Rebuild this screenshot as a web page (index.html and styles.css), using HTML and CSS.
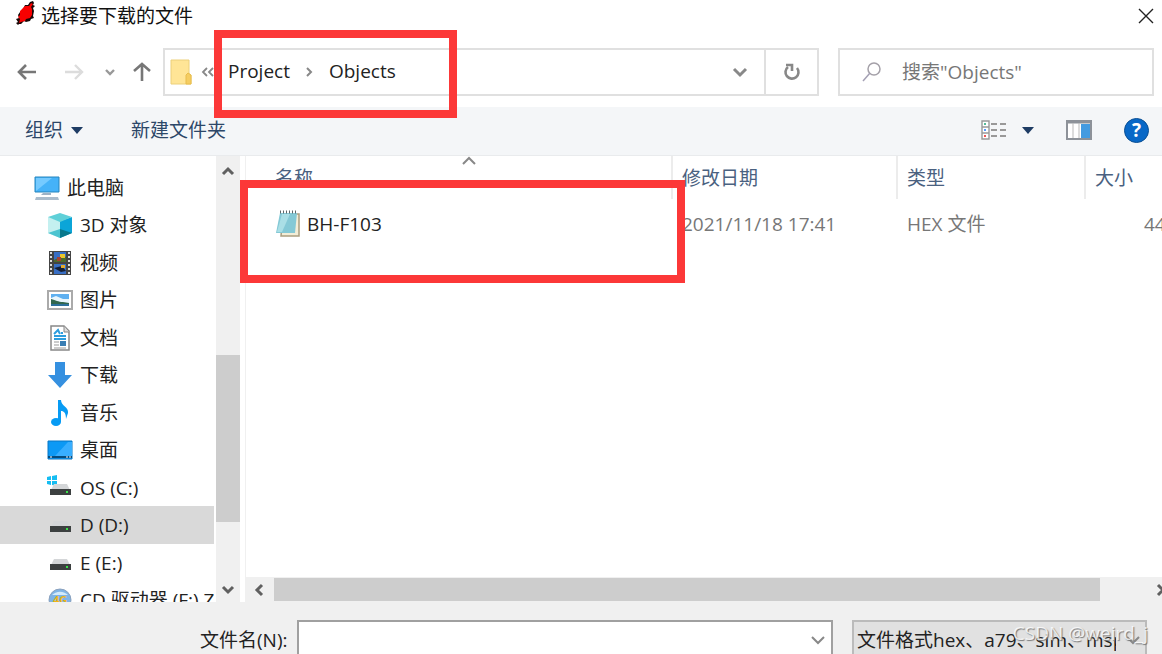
FILE: index.html
```html
<!DOCTYPE html>
<html lang="zh-CN">
<head>
    <meta charset="UTF-8">
    <meta name="viewport" content="width=device-width, initial-scale=1.0">
    <title>选择要下载的文件</title>
    <link rel="stylesheet" href="styles.css">
</head>
<body>
<div class="dialog">
    <header class="titlebar">
        <svg class="app-icon" width="20" height="24" viewBox="0 0 20 24">
            <path d="M9 4h3l2-3 3-1 1 2-1 2 2 1-2 2 1 3-1 5 1 2-3 1-1 2-4 1-2-1-3 3H3l-1 1-2-2 2-1-2-3 3-1-1-3 2-3 3-3z" fill="#1a0808"/>
            <path d="M9 5h4l2-3 2 1-2 3 1 2 0 6-2 3-4 1-1 2-4 1-2 1 1-4-2-2 2-2 0-4 3-3z" fill="#f80000"/>
        </svg>
        <h1>选择要下载的文件</h1>
        <button class="close" aria-label="关闭">
            <svg width="16" height="16" viewBox="0 0 16 16"><path d="M1 1l14 14M15 1L1 15" stroke="#222" stroke-width="1.4"/></svg>
        </button>
    </header>

    <nav class="navbar">
        <div class="nav-buttons">
            <button class="back" aria-label="后退"><svg width="20" height="18" viewBox="0 0 20 18"><path d="M19 9H2M9 2L2 9l7 7" fill="none" stroke="#777" stroke-width="2.6"/></svg></button>
            <button class="forward" aria-label="前进"><svg width="20" height="18" viewBox="0 0 20 18"><path d="M1 9h17M11 2l7 7-7 7" fill="none" stroke="#dcdcdc" stroke-width="2.4"/></svg></button>
            <button class="recent" aria-label="最近位置"><svg width="10" height="8" viewBox="0 0 10 8"><path d="M1 2l4 4 4-4" fill="none" stroke="#999" stroke-width="2.4"/></svg></button>
            <button class="up" aria-label="上移"><svg width="18" height="20" viewBox="0 0 18 20"><path d="M9 19V2M1 9l8-7 8 7" fill="none" stroke="#777" stroke-width="2.6"/></svg></button>
        </div>
        <div class="address">
            <svg width="22" height="26" viewBox="0 0 22 26">
                <path d="M1 1h18v14l2 1v9H1z" fill="#ffe596" stroke="#ecd07a"/>
                <path d="M16 24v-8l2-2 3 2v9h-5z" fill="#f5cd62" stroke="#e8bd4c"/>
            </svg>
            <svg class="more" width="14" height="12" viewBox="0 0 14 12"><path d="M6 2L2 6l4 4M12 2L8 6l4 4" fill="none" stroke="#888" stroke-width="1.8"/></svg>
            <a href="#">Project</a>
            <svg class="sep" width="8" height="12" viewBox="0 0 8 12"><path d="M2 2l4 4-4 4" fill="none" stroke="#888" stroke-width="2"/></svg>
            <a href="#">Objects</a>
            <button class="history" aria-label="以前的位置"><svg width="16" height="12" viewBox="0 0 16 12"><path d="M2 3l6 6 6-6" fill="none" stroke="#888" stroke-width="3"/></svg></button>
            <button class="refresh" aria-label="刷新"><svg width="18" height="20" viewBox="0 0 18 20"><path d="M14 6a6.500 6.500 0 1 1-9-1" fill="none" stroke="#888" stroke-width="2.6"/><path d="M3 3h6v6" fill="none" stroke="#888" stroke-width="2.6"/></svg></button>
        </div>
        <label class="search">
            <svg width="20" height="20" viewBox="0 0 20 20"><circle cx="12" cy="7" r="6" fill="none" stroke="#a4a0a8" stroke-width="1.5"/><path d="M8 11l-7 8" stroke="#a4a0b4" stroke-width="1.5"/></svg>
            <input type="text" placeholder='搜索"Objects"' aria-label="搜索">
        </label>
    </nav>

    <div class="toolbar">
        <button class="organize">组织 <svg width="12" height="7" viewBox="0 0 12 7"><path d="M0 0h12L6 7z" fill="#1e3c64"/></svg></button>
        <button>新建文件夹</button>
        <div class="view-tools">
            <button class="view" aria-label="更改视图">
                <svg width="26" height="20" viewBox="0 0 26 20">
                    <path d="M1 1h7v18H1zM1 7h7M1 13h7" fill="#fff" stroke="#999" stroke-width="1.4"/>
                    <path d="M3 4h2" stroke="#5b9" stroke-width="2"/><path d="M3 10h2" stroke="#59f" stroke-width="2"/><path d="M3 16h2" stroke="#e55" stroke-width="2"/>
                    <path d="M10 4h6M19 4h6M10 10h6M19 10h6M10 16h6M19 16h6" stroke="#999" stroke-width="2"/>
                </svg>
                <svg width="12" height="7" viewBox="0 0 12 7"><path d="M0 0h12L6 7z" fill="#1e3c64"/></svg>
            </button>
            <button aria-label="预览窗格"><svg width="26" height="20" viewBox="0 0 26 20"><path d="M1 1h24v18H1z" fill="#fff" stroke="#8d9299" stroke-width="2"/><path d="M1 2h24" stroke="#8d9299" stroke-width="3"/><path d="M7 3v15M13 3v15" stroke="#bbb"/><path d="M15 4h9v14h-9z" fill="#449be0"/></svg></button>
            <button class="help" aria-label="帮助">?</button>
        </div>
    </div>

    <main class="panes">
        <aside class="tree">
            <ul>
                <li class="root"><svg width="26" height="26" viewBox="0 0 26 26"><path d="M1 2h24v15H1z" fill="#45b2f8" stroke="#2785bd"/><path d="M2 16L18 3H2z" fill="#75caff"/><path d="M9 18h8v2H7z" fill="#9db2c5"/><path d="M2 22h22l1 3H1z" fill="#aabccc"/></svg><a href="#">此电脑</a></li>
                <li><svg width="26" height="26" viewBox="0 0 26 26"><path d="M1 5l12 4v17L1 21z" fill="#c4f0f0"/><path d="M25 5L13 9v17l12-5z" fill="#0ba5d8"/><path d="M1 5l12-4 12 4-12 5z" fill="#5fd0d8"/><path d="M1 21l12-4v9z" fill="#4cc4d0"/><path d="M13 17l12 4-12 5z" fill="#08788c"/></svg><a href="#">3D 对象</a></li>
                <li><svg width="26" height="26" viewBox="0 0 26 26"><path d="M2 1h22v24H2z" fill="#444"/><path d="M4 2v22M22 2v22" stroke="#ddd" stroke-width="2" stroke-dasharray="2 2"/><path d="M7 2h12v10H7zM7 14h12v10H7z" fill="#386ec4"/><path d="M7 10l8-4 4 1v5H7z" fill="#4e6b2b"/><path d="M13 4h5v4h-5z" fill="#e9c62d"/><path d="M10 7h4v4h-4z" fill="#a64133"/><path d="M7 18l8-2 4 5-5 1z" fill="#161f35"/><path d="M14 15h4v3h-4z" fill="#e3a92d"/></svg><a href="#">视频</a></li>
                <li><svg width="26" height="26" viewBox="0 0 26 26"><path d="M1 4h24v18H1z" fill="#fff" stroke="#aaa" stroke-width="2"/><path d="M4 7h18v12H4z" fill="#5fb0f0"/><path d="M4 11l5-2 7 3h6v4H4z" fill="#e8f5fc"/><path d="M4 12c5 1 7 3 12 3l6 1v1H4z" fill="#31674e"/><path d="M4 17h18v2H4z" fill="#2d719b"/></svg><a href="#">图片</a></li>
                <li><svg width="26" height="26" viewBox="0 0 26 26"><path d="M4 1h13l5 5v19H4z" fill="#fff" stroke="#888" stroke-width="1.5"/><path d="M17 1v6h5" fill="#ddd" stroke="#888"/><path d="M7 9l4-4 2 4M14 8h2M7 11h12M7 14h12" fill="none" stroke="#2d9dde" stroke-width="2"/><path d="M7 17h5M7 20h5M7 23h12" stroke="#999"/><path d="M13 16h6v5h-6z" fill="#397db3"/></svg><a href="#">文档</a></li>
                <li><svg width="26" height="26" viewBox="0 0 26 26"><path d="M8 0h10v13h7L13 26 1 13h7z" fill="#3590e0"/></svg><a href="#">下载</a></li>
                <li><svg width="26" height="26" viewBox="0 0 26 26"><ellipse cx="9" cy="22" rx="5" ry="4" fill="#079bf4"/><path d="M11 0h3c0 6 8 7 7 13l-2 6c0-6-2-8-5-8v11h-3z" fill="#079bf4"/></svg><a href="#">音乐</a></li>
                <li><svg width="26" height="26" viewBox="0 0 26 26"><path d="M1 4h24v18H1z" fill="#0c99f5" stroke="#0876c4"/><path d="M8 19L21 5h4v14z" fill="#38aeff"/><path d="M1 20h24" stroke="#064b7c" stroke-width="2"/><path d="M3 20h2M19 20h2M22 20h2" stroke="#fff"/></svg><a href="#">桌面</a></li>
                <li><svg width="26" height="26" viewBox="0 0 26 26"><path d="M0 2l4-1v4H0zM5 1l5-1v5H5zM0 6h4v4L0 9zM5 6h5v5l-5-1z" fill="#16bdf2"/><path d="M7 9h13l3 6H4z" fill="#d4d6d8"/><path d="M3 14h21v6H3z" fill="#3c4040"/><path d="M19 16h2v2h-2z" fill="#39e34a"/></svg><a href="#">OS (C:)</a></li>
                <li class="selected"><svg width="26" height="26" viewBox="0 0 26 26"><path d="M7 9h13l3 6H4z" fill="#d4d6d8"/><path d="M3 14h21v6H3z" fill="#3c4040"/><path d="M19 16h2v2h-2z" fill="#39e34a"/></svg><a href="#">D (D:)</a></li>
                <li><svg width="26" height="26" viewBox="0 0 26 26"><path d="M7 9h13l3 6H4z" fill="#d4d6d8"/><path d="M3 14h21v6H3z" fill="#3c4040"/><path d="M19 16h2v2h-2z" fill="#39e34a"/></svg><a href="#">E (E:)</a></li>
                <li><svg width="26" height="26" viewBox="0 0 26 26"><circle cx="13" cy="13" r="11" fill="#7fb4e6" stroke="#8ba1bd"/><path d="M5 8a10 8 0 0 1 16 0z" fill="#d2eafb"/><text class="disc-text" x="6" y="17">4G</text></svg><a href="#">CD 驱动器 (F:) Z</a></li>
            </ul>
        </aside>
        <div class="vscroll">
            <svg width="14" height="12" viewBox="0 0 14 12"><path d="M2 9l5-5 5 5" fill="none" stroke="#606060" stroke-width="3"/></svg>
            <div class="track"><div class="thumb"></div></div>
            <svg width="14" height="12" viewBox="0 0 14 12"><path d="M2 3l5 5 5-5" fill="none" stroke="#606060" stroke-width="3"/></svg>
        </div>
        <section class="files">
            <table>
                <thead>
                    <tr>
                        <th class="name">名称<svg class="sort" width="14" height="9" viewBox="0 0 14 9"><path d="M1 8l6-6 6 6" fill="none" stroke="#888" stroke-width="2"/></svg></th>
                        <th class="date">修改日期</th>
                        <th class="type">类型</th>
                        <th class="size">大小</th>
                    </tr>
                </thead>
                <tbody>
                    <tr>
                        <td class="name">
                            <a href="#"><svg width="26" height="28" viewBox="0 0 26 28"><path d="M8 4h16v22H6z" fill="#f3edd7" stroke="#aa9e80" stroke-width="1.5"/><path d="M5 3h17l-2 20H1z" fill="#84c9d6"/><path d="M7 4h8L7 22H2z" fill="#aadfe6"/><path d="M5 2h17" stroke="#5e686b" stroke-width="3" stroke-dasharray="1 2"/></svg>BH-F103</a>
                        </td>
                        <td class="date">2021/11/18 17:41</td>
                        <td class="type">HEX 文件</td>
                        <td class="size">44</td>
                    </tr>
                </tbody>
            </table>
            <div class="hscroll">
                <svg width="12" height="14" viewBox="0 0 12 14"><path d="M9 2L4 7l5 5" fill="none" stroke="#606060" stroke-width="3"/></svg>
                <div class="thumb"></div>
                <svg class="right" width="12" height="14" viewBox="0 0 12 14"><path d="M3 2l5 5-5 5" fill="none" stroke="#606060" stroke-width="3"/></svg>
            </div>
        </section>
    </main>

    <footer class="footer">
        <label for="filename">文件名(N):</label>
        <div class="combo">
            <input id="filename" type="text">
            <button aria-label="展开"><svg width="14" height="10" viewBox="0 0 14 10"><path d="M1 2l6 6 6-6" fill="none" stroke="#888" stroke-width="2"/></svg></button>
        </div>
        <div class="filter">
            <select aria-label="文件类型"><option>文件格式hex、a79、sim、msp</option></select>
            <svg width="14" height="10" viewBox="0 0 14 10"><path d="M1 2l6 6 6-6" fill="none" stroke="#888" stroke-width="2"/></svg>
        </div>
    </footer>

    <div class="mark mark-path"></div>
    <div class="mark mark-file"></div>
    <span class="watermark">CSDN @weird_j</span>
</div>
</body>
</html>
```

FILE: styles.css
```css
* {
    box-sizing: border-box;
}
body {
    margin: 0;
    overflow: hidden;
    font-family: "Open Sans", "Noto Sans CJK SC", sans-serif;
    font-size: 19px;
    line-height: 28px;
    color: #222;
    background: #fff;
}
button, input, select {
    font: inherit;
    color: inherit;
    border: none;
    background: none;
    padding: 0;
    margin: 0;
    outline: none;
}
button {
    display: flex;
    align-items: center;
}
svg {
    display: block;
    flex: none;
}
a {
    color: inherit;
    text-decoration: none;
}
.dialog {
    position: relative;
    display: flex;
    flex-direction: column;
    height: 100vh;
    overflow: hidden;
}

/* title */
.titlebar {
    display: flex;
    align-items: center;
    flex: none;
    height: 32px;
    padding: 0 8px 0 16px;
}
.titlebar h1 {
    margin: 0 auto 0 5px;
    font-size: 19px;
    font-weight: normal;
    color: #111;
}
.app-icon {
    margin-bottom: 6px;
}

/* navigation */
.navbar {
    display: flex;
    flex: none;
    height: 75px;
    padding: 16px 8px 11px 17px;
}
.nav-buttons {
    display: flex;
    align-items: center;
    width: 146px;
}
.forward {
    margin-left: 27px;
}
.recent {
    margin-left: 21px;
}
.up {
    margin-left: 18px;
}
.address {
    display: flex;
    align-items: center;
    flex: 1;
    border: 2px solid #e0e0e0;
    padding-left: 5px;
    color: #222;
}
.address a {
    padding-bottom: 2px;
}
.more {
    margin: 0 13px 0 9px;
}
.sep {
    margin: 0 16px 0 15px;
}
.history {
    margin-left: auto;
    padding: 0 16px;
}
.refresh {
    align-self: stretch;
    width: 53px;
    border-left: 2px solid #e0e0e0;
    justify-content: center;
}
.search {
    display: flex;
    align-items: center;
    width: 316px;
    margin-left: 19px;
    padding-left: 22px;
    gap: 20px;
    border: 2px solid #e0e0e0;
}
.search input {
    flex: 1;
    min-width: 0;
}
.search input::placeholder {
    color: #777;
    opacity: 1;
}

/* toolbar */
.toolbar {
    display: flex;
    align-items: center;
    flex: none;
    height: 49px;
    padding: 0 13px 2px 25px;
    gap: 48px;
    color: #2c4768;
    background: #f4f6f8;
    border-bottom: 1px solid #e9ebed;
}
.organize {
    gap: 8px;
}
.view-tools {
    display: flex;
    align-items: center;
    gap: 32px;
    margin-left: auto;
}
.view {
    gap: 15px;
}
.help {
    justify-content: center;
    width: 25px;
    height: 25px;
    border: 1px solid #0a4f94;
    border-radius: 50%;
    background: #0868c7;
    color: #fff;
    font-weight: bold;
}

/* folders */
.panes {
    display: flex;
    flex: 1;
    min-height: 0;
}
.tree {
    width: 216px;
    padding: 13px 2px 0 0;
    overflow: hidden;
}
.tree ul {
    margin: 0;
    padding: 0;
    list-style: none;
}
.tree li {
    display: flex;
    align-items: center;
    height: 37px;
    gap: 7px;
    padding-left: 47px;
    white-space: nowrap;
    overflow: hidden;
}
.tree li:nth-child(even) {
    height: 38px;
}
.tree .root {
    padding-left: 34px;
}
.tree .selected {
    background: #d9d9d9;
}
.disc-text {
    font-size: 11px;
    font-weight: bold;
    fill: #f0b414;
}
.vscroll {
    display: flex;
    flex-direction: column;
    align-items: center;
    width: 24px;
    padding: 9px 0 6px;
    background: #f0f0f0;
}
.track {
    flex: 1;
    align-self: stretch;
    padding-top: 178px;
}
.vscroll .thumb {
    height: 167px;
    background: #cdcdcd;
}

/* file list */
.files {
    display: flex;
    flex: 1;
    flex-direction: column;
    justify-content: space-between;
    min-width: 0;
    margin-left: 5px;
    border-left: 1px solid #f0f0f0;
}
.files table {
    width: 100%;
    table-layout: fixed;
    border-collapse: collapse;
}
.files th {
    height: 43px;
    padding: 0 0 0 9px;
    border-left: 2px solid #ececec;
    font-weight: normal;
    text-align: left;
    color: #4a6180;
}
.files td {
    height: 51px;
    padding: 0 0 2px 10px;
    color: #777;
    white-space: nowrap;
}
.files .name {
    position: relative;
    width: 426px;
    padding-left: 29px;
    border-left: none;
}
.files .date {
    width: 225px;
}
.files .type {
    width: 188px;
}
.files td.size {
    padding-left: 59px;
}
.files td a {
    display: flex;
    align-items: center;
    gap: 6px;
    color: #222;
}
.sort {
    position: absolute;
    top: 0;
    left: 216px;
}
.hscroll {
    display: flex;
    align-items: center;
    height: 25px;
    padding-left: 7px;
    gap: 9px;
    background: #f0f0f0;
    overflow: hidden;
}
.hscroll .thumb {
    flex: 1;
    height: 23px;
    background: #cdcdcd;
}
.hscroll .right {
    margin: 0 -5px 0 46px;
}

/* file name and type */
.footer {
    display: flex;
    flex: none;
    height: 52px;
    padding: 18px 15px 0 200px;
    background: #f0f0f0;
}
.footer label {
    width: 97px;
    height: 38px;
    padding-top: 6px;
    white-space: nowrap;
}
.combo {
    display: flex;
    flex: 1;
    height: 40px;
    border: 2px solid #a0a0a0;
    background: #fff;
}
.combo input {
    flex: 1;
    min-width: 0;
}
.combo button {
    padding: 0 6px;
}
.filter {
    display: flex;
    align-items: center;
    width: 295px;
    height: 40px;
    margin-left: 19px;
    padding: 0 5px 0 3px;
    border: 2px solid #bbb;
    background: #e1e1e1;
}
.filter select {
    flex: 1;
    min-width: 0;
    margin-right: 10px;
    appearance: none;
    color: #222;
}

/* marks over the window */
.mark {
    position: absolute;
    border: 8px solid #fc3838;
    pointer-events: none;
}
.mark-path {
    left: 214px;
    top: 30px;
    width: 243px;
    height: 88px;
}
.mark-file {
    left: 240px;
    top: 180px;
    width: 445px;
    height: 103px;
}
.watermark {
    position: absolute;
    right: 14px;
    bottom: 7px;
    color: rgba(255, 255, 255, 0.8);
    text-shadow: 1px 1px 1px #777;
}
```
